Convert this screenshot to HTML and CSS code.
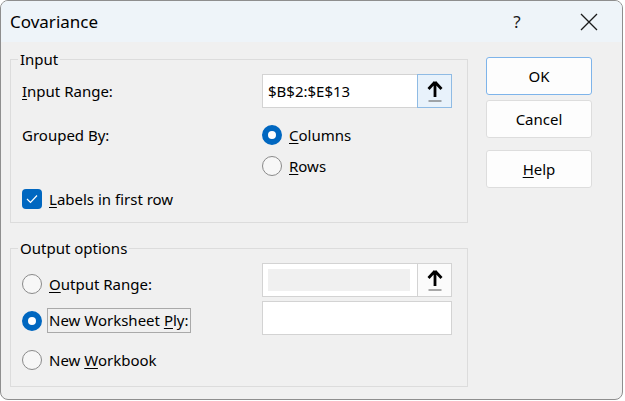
FILE: index.html
```html
<!DOCTYPE html>
<html lang="en">
<head>
    <meta charset="UTF-8">
    <meta name="viewport" content="width=device-width, initial-scale=1.0">
    <title>Covariance</title>
    <link rel="stylesheet" href="styles.css">
</head>
<body>

    <div class="window">
        <!-- Title bar -->
        <div class="titlebar">
            <span class="title">Covariance</span>
            <span class="help-btn">?</span>
            <span class="close-btn">
                <svg width="18" height="18" viewBox="0 0 18 18"><path d="M1 1 L17 17 M17 1 L1 17" stroke="#1a1a1a" stroke-width="1.3" fill="none"/></svg>
            </span>
        </div>

        <div class="content">
            <div class="groups">

                <!-- Input -->
                <fieldset class="group group-input">
                    <legend>Input</legend>
                    <div class="row row-range">
                        <span class="label"><u>I</u>nput Range:</span>
                        <div class="field">
                            <span class="field-text">$B$2:$E$13</span>
                            <span class="picker active">
                                <svg width="16" height="22" viewBox="0 0 16 22"><path d="M8 2 L1.5 9 M8 2 L14.5 9 M8 2.5 V17" stroke="#000" stroke-width="2.8" fill="none"/><path d="M1.5 21 H14.5" stroke="#555" stroke-width="1"/></svg>
                            </span>
                        </div>
                    </div>
                    <div class="row row-radio">
                        <span class="label">Grouped By:</span>
                        <span class="option"><span class="radio checked"></span><span><u>C</u>olumns</span></span>
                    </div>
                    <div class="row row-radio">
                        <span class="label"></span>
                        <span class="option"><span class="radio"></span><span><u>R</u>ows</span></span>
                    </div>
                    <div class="row row-check">
                        <span class="option"><span class="checkbox">
                            <svg width="12" height="10" viewBox="0 0 12 10"><path d="M1 5 L4.5 8.5 L11 1.5" stroke="#fff" stroke-width="1.2" fill="none"/></svg>
                        </span><span><u>L</u>abels in first row</span></span>
                    </div>
                </fieldset>

                <!-- Output -->
                <fieldset class="group group-output">
                    <legend>Output options</legend>
                    <div class="out-grid">
                        <div class="out-options">
                            <span class="option opt-range"><span class="radio"></span><span><u>O</u>utput Range:</span></span>
                            <span class="option opt-ply"><span class="radio checked"></span><span class="focus">New Worksheet <u>P</u>ly:</span></span>
                            <span class="option opt-book"><span class="radio"></span><span>New <u>W</u>orkbook</span></span>
                        </div>
                        <div class="out-fields">
                            <div class="field">
                                <span class="field-disabled"></span>
                                <span class="picker">
                                    <svg width="16" height="22" viewBox="0 0 16 22"><path d="M8 2 L1.5 9 M8 2 L14.5 9 M8 2.5 V17" stroke="#000" stroke-width="2.8" fill="none"/><path d="M1.5 21 H14.5" stroke="#555" stroke-width="1"/></svg>
                                </span>
                            </div>
                            <div class="field plain"></div>
                        </div>
                    </div>
                </fieldset>
            </div>

            <!-- Buttons -->
            <div class="buttons">
                <button class="btn default">OK</button>
                <button class="btn">Cancel</button>
                <button class="btn help"><u>H</u>elp</button>
            </div>
        </div>
    </div>

</body>
</html>
```

FILE: styles.css
```css
* {
    box-sizing: border-box;
    margin: 0;
    padding: 0;
}

body {
    background: #fff;
    font-family: 'Noto Sans', 'Open Sans', sans-serif;
    font-size: 15px;
    color: #000;
}

u {
    text-decoration: underline;
    text-underline-offset: 2px;
    text-decoration-thickness: 1px;
}

.window {
    width: 623px;
    height: 400px;
    border: 1px solid #8e8e8e;
    border-radius: 8px;
    overflow: hidden;
    background: #f0f0f0;
    display: flex;
    flex-direction: column;
}

/* Title bar */
.titlebar {
    height: 41px;
    background: #eef4f9;
    display: flex;
    align-items: center;
    padding-left: 9px;
    flex-shrink: 0;
}

.title {
    font-size: 17px;
    flex: 1;
}

.help-btn {
    font-size: 17px;
    width: 60px;
    text-align: center;
    margin-right: 19px;
    color: #1a1a1a;
}

.close-btn {
    width: 46px;
    display: flex;
    justify-content: center;
    margin-right: 10px;
}

/* Content */
.content {
    display: flex;
    padding-left: 9px;
}

.groups {
    width: 458px;
}

.group {
    border: 1px solid #dcdcdc;
    padding: 0 0 0 11px;
}

.group legend {
    margin-left: -4px;
    padding: 0 2px;
    line-height: 20px;
}

.group-input {
    margin-top: 7px;
    height: 174px;
}

.group-output {
    margin-top: 15px;
    height: 149px;
}

.row {
    display: flex;
    align-items: center;
}

.label {
    width: 240px;
}

.row-range {
    height: 34px;
    margin-top: 5px;
}

.row-radio {
    height: 31px;
}

.row-range + .row-radio {
    margin-top: 11px;
}

.row-check {
    height: 30px;
    margin-top: 3px;
}

/* Fields */
.field {
    width: 190px;
    height: 34px;
    background: #fff;
    border: 1px solid #d3d3d3;
    display: flex;
    align-items: center;
}

.field-text {
    flex: 1;
    padding-left: 5px;
}

.field-disabled {
    width: 142px;
    height: 22px;
    margin-left: 5px;
    margin-right: 7px;
    background: #f0f0f0;
}

.field.plain {
    margin-top: 4px;
}

.picker {
    margin-left: auto;
    width: 35px;
    height: 34px;
    margin-top: -1px;
    margin-bottom: -1px;
    margin-right: -1px;
    border: 1px solid #d3d3d3;
    background: #fbfbfb;
    display: flex;
    align-items: center;
    justify-content: center;
}

.picker.active {
    border-color: #8fbbe4;
    background: #e8f2fb;
}

/* Radio & checkbox */
.option {
    display: flex;
    align-items: center;
}

.radio {
    width: 20px;
    height: 20px;
    border-radius: 50%;
    border: 1px solid #8a8a8a;
    background: #f7f7f7;
    margin-right: 7px;
    flex-shrink: 0;
}

.radio.checked {
    border: 6px solid #0067c0;
    background: #fff;
}

.checkbox {
    width: 20px;
    height: 20px;
    border-radius: 4px;
    background: #0067c0;
    margin-right: 7px;
    display: flex;
    align-items: center;
    justify-content: center;
}

/* Output group */
.out-grid {
    display: flex;
}

.out-options {
    width: 240px;
    display: flex;
    flex-direction: column;
}

.opt-range {
    margin-top: 16px;
}

.opt-ply {
    margin-top: 14px;
}

.opt-ply .radio {
    margin-right: 5px;
}

.focus {
    border: 1px solid #a9a9a9;
    padding: 0 1px;
    line-height: 23px;
}

.opt-book {
    margin-top: 17px;
}

.out-fields {
    margin-top: 5px;
}

/* Buttons */
.buttons {
    margin-left: 18px;
    margin-top: 15px;
    display: flex;
    flex-direction: column;
}

.btn {
    width: 106px;
    height: 38px;
    font-family: inherit;
    font-size: 15px;
    background: #fdfdfd;
    border: 1px solid #dddddd;
    border-radius: 3px;
    margin-bottom: 5px;
}

.btn.default {
    border-color: #7eb4ea;
}

.btn.help {
    margin-top: 7px;
}
```
